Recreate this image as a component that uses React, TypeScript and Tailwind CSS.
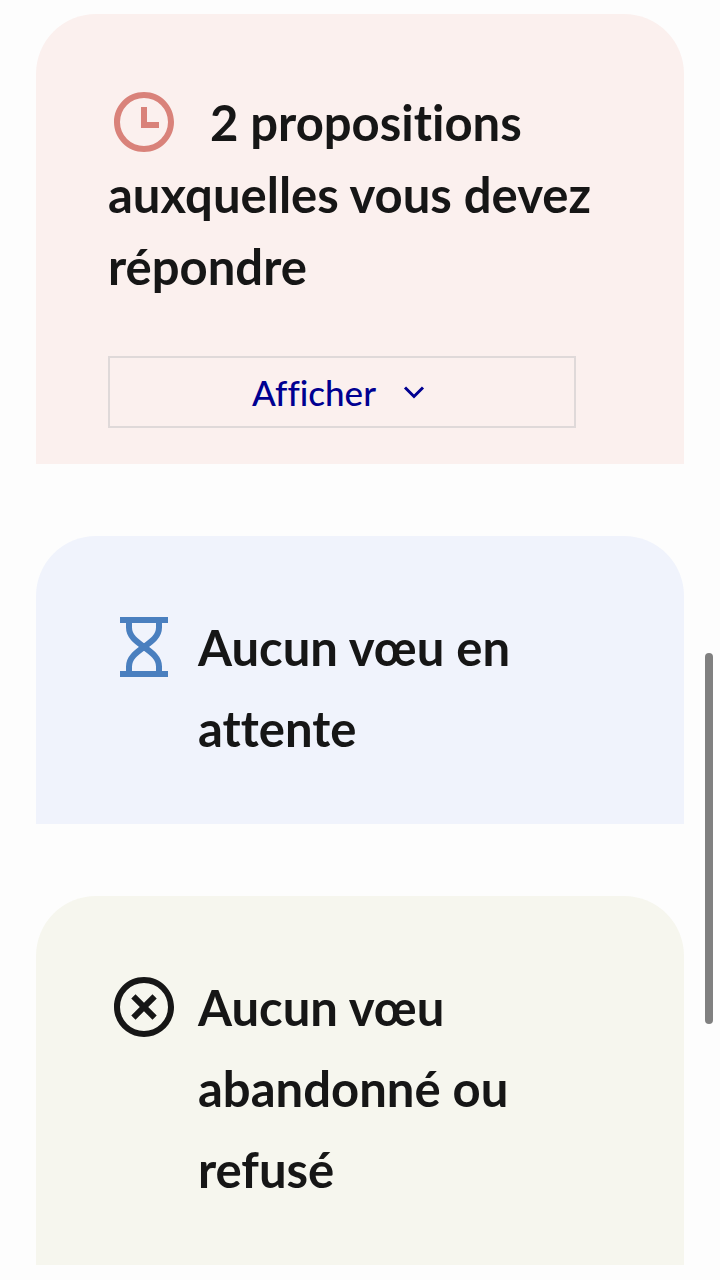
import type { ReactNode } from "react"

type CardProps = {
  className: string
  children: ReactNode
}

function Card({ className, children }: CardProps) {
  return (
    <section className={`rounded-t-[60px] px-[72px] text-[49px] font-bold text-[#161616] ${className}`}>
      {children}
    </section>
  )
}

function ClockIcon() {
  return (
    <svg
      viewBox="0 0 24 24"
      fill="currentColor"
      aria-hidden="true"
      className="mr-[18px] inline-block size-[72px] align-top text-[#d9827a]"
    >
      <path d="M12 22C6.477 22 2 17.523 2 12S6.477 2 12 2s10 4.477 10 10-4.477 10-10 10zm0-2a8 8 0 1 0 0-16 8 8 0 0 0 0 16zm1-8h4v2h-6V7h2v5z" />
    </svg>
  )
}

function HourglassIcon() {
  return (
    <svg
      viewBox="0 0 24 24"
      fill="none"
      stroke="currentColor"
      strokeWidth="2"
      aria-hidden="true"
      className="mt-1 size-[72px] shrink-0 text-[#4a7fbf]"
    >
      <path d="M4 3h16M4 21h16" />
      <path d="M7 3v2.5C7 8.500 9.500 10.200 12 12s5 3.500 5 6.500V21M17 3v2.500c0 3-2.500 4.700-5 6.500s-5 3.500-5 6.500V21" />
    </svg>
  )
}

function CloseCircleIcon() {
  return (
    <svg viewBox="0 0 24 24" fill="currentColor" aria-hidden="true" className="mt-1 size-[72px] shrink-0">
      <path d="M12 22C6.477 22 2 17.523 2 12S6.477 2 12 2s10 4.477 10 10-4.477 10-10 10zm0-2a8 8 0 1 0 0-16 8 8 0 0 0 0 16zm0-9.414l2.828-2.829 1.415 1.415L13.414 12l2.829 2.828-1.415 1.415L12 13.414l-2.828 2.829-1.415-1.415L10.586 12 7.757 9.172l1.415-1.415L12 10.586z" />
    </svg>
  )
}

export default function App() {
  return (
    <main className="relative min-h-screen bg-[#fdfdfd] px-9 pt-3.5 pb-4 font-['Lato','Open_Sans',sans-serif] [font-variant-ligatures:none]">
      <div className="flex flex-col gap-[72px]">
        <Card className="bg-[#fbf0ee] pt-[72px] pb-9">
          <h2 className="leading-[72px]">
            <ClockIcon /> 2 propositions auxquelles vous devez répondre
          </h2>
          <div className="mt-[54px] pr-9">
            <button
              type="button"
              className="flex h-[72px] w-full items-center justify-center gap-5 border-2 border-[#dfd9d9] text-[35px] font-medium text-[#000091]"
            >
              Afficher
              <svg
                viewBox="0 0 24 24"
                fill="none"
                stroke="currentColor"
                strokeWidth="2"
                aria-hidden="true"
                className="size-9"
              >
                <path d="M6 9l6 6 6-6" />
              </svg>
            </button>
          </div>
        </Card>
        <Card className="bg-[#f0f3fc] pt-[71px] pb-[55px]">
          <h2 className="flex gap-[18px] leading-[81px]">
            <HourglassIcon />
            Aucun vœu en attente
          </h2>
        </Card>
        <Card className="bg-[#f6f6ee] pt-[71px] pb-[55px]">
          <h2 className="flex gap-[18px] leading-[81px]">
            <CloseCircleIcon />
            Aucun vœu abandonné ou refusé
          </h2>
        </Card>
      </div>
      <div className="absolute top-[653px] right-[7px] h-[371px] w-2 rounded-full bg-[#808080]" />
    </main>
  )
}
